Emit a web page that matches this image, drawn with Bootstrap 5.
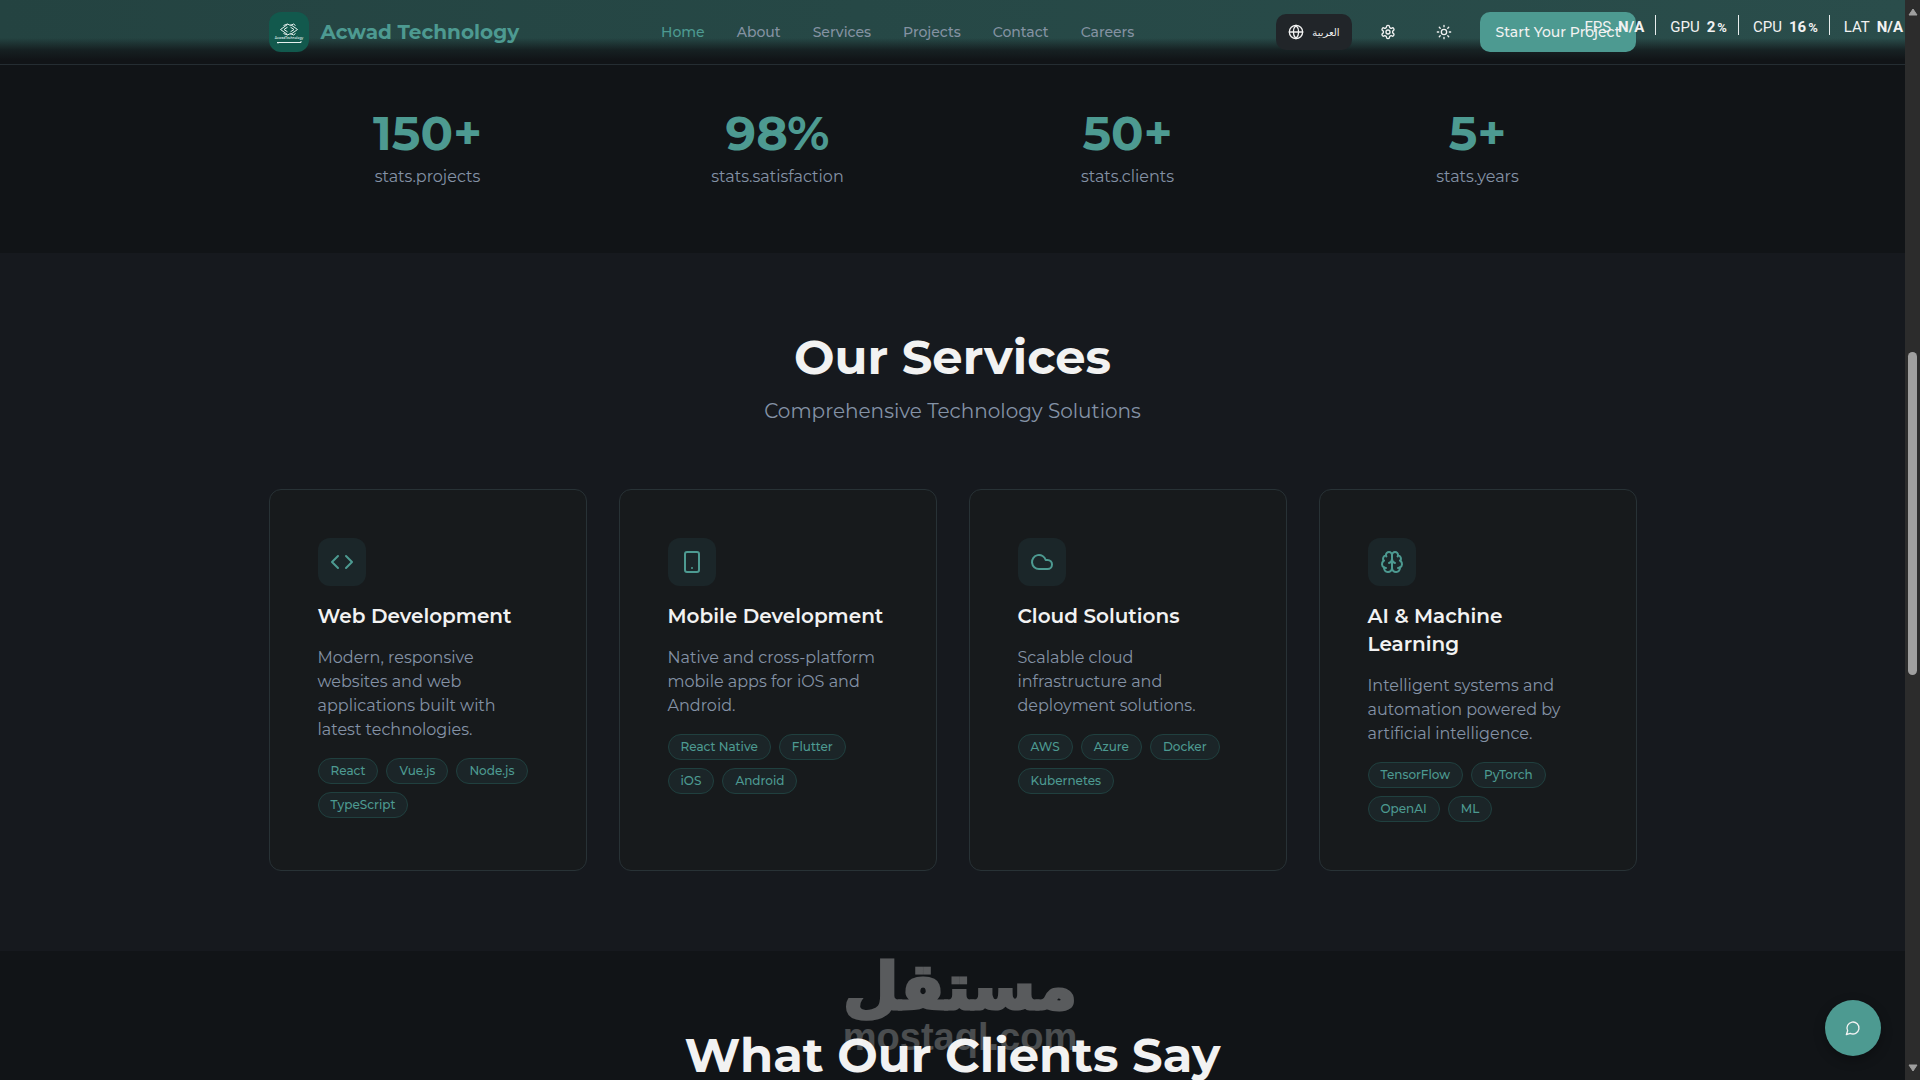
<!DOCTYPE html>
<html lang="en" data-bs-theme="dark">
<head>
<meta charset="utf-8">
<meta name="viewport" content="width=device-width, initial-scale=1">
<title>Acwad Technology</title>
<link href="https://cdn.jsdelivr.net/npm/bootstrap@5.3.0/dist/css/bootstrap.min.css" rel="stylesheet">
<style>
  :root { --teal: #4d9a91; --ink: #f2f2f2; --soft: #8492a6; --base: #111417; --raised: #16191e; }
  body { font-family: Montserrat, Inter, "Open Sans", sans-serif; font-size: 16px; line-height: 24px; background: var(--base); color: var(--ink); overflow: hidden; }
  .page-wrap { max-width: 1400px; padding: 0 16px; }
  .site-header { height: 65px; border-bottom: 1px solid #252d32; background: linear-gradient(180deg, transparent 38px, rgba(17,20,23,.75) 50px, #111417 60px), linear-gradient(90deg, #244341, #264846 45%, #2a4d4b); }
  .brand { color: var(--teal); font-size: 20px; font-weight: 700; text-decoration: none; }
  .brand-logo { width: 40px; height: 40px; border-radius: 12px; background: #12594d; }
  .site-nav { gap: 32px; font-size: 14px; font-weight: 500; }
  .site-nav a { color: #8492a2; text-decoration: none; }
  .site-nav a.active { color: var(--teal); }
  .lang-btn { height: 36px; padding: 0 12px; border: 0; border-radius: 10px; background: #212529; color: var(--ink); font: 500 10px "DejaVu Sans", sans-serif; }
  .tool-btn { width: 40px; height: 36px; border: 0; background: none; color: var(--ink); }
  .cta-btn { height: 40px; padding: 0 16px; border: 0; border-radius: 10px; background: var(--teal); color: var(--ink); font-size: 14px; font-weight: 500; }
  .stats { padding: 44px 0 64px; }
  .stat-num { font-size: 48px; line-height: 48px; font-weight: 700; color: var(--teal); margin-bottom: 8px; }
  .muted { color: var(--soft); }
  .section { padding: 80px 0; }
  .section-title { font-size: 48px; line-height: 48px; font-weight: 700; margin: 0; color: var(--ink); }
  .section-sub { font-size: 20px; line-height: 28px; margin: 16px 0 64px; }
  .cols { --bs-gutter-x: 32px; }
  .service { height: 100%; padding: 48px; border: 1px solid #283236; border-radius: 12px; background: #171a1c; }
  .service-icon { width: 48px; height: 48px; border-radius: 12px; background: #1b2629; color: var(--teal); }
  .service h3 { font-size: 20px; line-height: 28px; font-weight: 600; margin: 16px 0; color: var(--ink); }
  .service p { margin: 0 0 16px; }
  .chip { height: 26px; padding: 0 12px; line-height: 24px; font-size: 12px; font-weight: 500; border: 1px solid #20403f; border-radius: 13px; background: #1b2528; color: var(--teal); }
  .perf { top: 15px; right: 17px; font: 15px/15px Roboto, sans-serif; white-space: nowrap; }
  .perf span { padding: 5px 11px 0 14px; border-left: 1px solid #e8eded; }
  .perf span:first-child { border: 0; }
  .perf span:last-child { padding-right: 0; }
  .perf b { margin-left: 7px; }
  .perf i { font-style: normal; font-size: 13px; margin-left: 2px; }
  .chat-btn { right: 39px; bottom: 24px; width: 56px; height: 56px; border: 0; border-radius: 50%; background: var(--teal); color: var(--ink); box-shadow: 0 4px 12px rgba(0,0,0,.3); }
  .watermark { left: 0; right: 0; bottom: 23px; opacity: .3; color: #fff; pointer-events: none; }
  .wm-ar { font: 700 64px/60px "DejaVu Sans", sans-serif; -webkit-text-stroke: 3px #fff; }
  .wm-en { font: 700 38px/40px "Liberation Sans", sans-serif; opacity: .8; }
  .scroller { width: 15px; background: #2c2c2c; padding: 8px 3px; }
  .scroll-track { padding-bottom: 54px; }
  .scroll-thumb { width: 9px; height: 323px; border-radius: 5px; background: #9f9f9f; }
  .svg-line { fill: none; stroke: currentColor; stroke-width: 2; stroke-linecap: round; stroke-linejoin: round; }
</style>
<script src="https://cdn.jsdelivr.net/npm/bootstrap@5.3.0/dist/js/bootstrap.bundle.min.js"></script>
</head>
<body class="d-flex vh-100">
<div class="flex-grow-1 overflow-hidden">
  <header class="site-header">
    <div class="page-wrap mx-auto h-100 d-flex align-items-center justify-content-between">
      <a class="brand d-flex align-items-center" href="#">
        <svg class="brand-logo me-2" viewBox="0 0 40 40" aria-hidden="true">
          <g fill="none" stroke="#e6f0ee" stroke-linejoin="round">
            <path d="M18.500 12.500 11.500 17.500l7 5M21.500 12.500l7 5-7 5M18.500 15.200l-3.500 2.300 3.500 2.300M21.500 15.200l3.500 2.300-3.500 2.300M14.500 13.500l4-1.500 3 1.500 3-1.500 2 1.500M14.500 21.500l4 1.500 3-1.500 3 1.500 2-1.500"/>
            <path d="M8 30.500h24v-1.500M9 30v1.500"/>
          </g>
          <text x="20" y="27" font-size="3" font-weight="600" text-anchor="middle" fill="#d5e5e2">AcwadTechnology</text>
        </svg>
        <span class="ms-1">Acwad Technology</span>
      </a>
      <nav class="site-nav d-flex">
        <a class="active" href="#">Home</a><a href="#">About</a><a href="#">Services</a><a href="#">Projects</a><a href="#">Contact</a><a href="#">Careers</a>
      </nav>
      <div class="d-flex align-items-center gap-3">
        <button class="lang-btn d-flex align-items-center gap-2" type="button">
          <svg class="svg-line" width="16" height="16" viewBox="0 0 24 24"><circle cx="12" cy="12" r="10"/><path d="M12 2a14.500 14.500 0 0 0 0 20 14.500 14.500 0 0 0 0-20M2 12h20"/></svg>
          <span lang="ar">العربية</span>
        </button>
        <button class="tool-btn d-flex align-items-center justify-content-center" type="button" aria-label="Settings">
          <svg class="svg-line" width="16" height="16" viewBox="0 0 24 24"><path d="M12.220 2h-.44a2 2 0 0 0-2 2v.18a2 2 0 0 1-1 1.730l-.43.25a2 2 0 0 1-2 0l-.15-.08a2 2 0 0 0-2.730.73l-.22.38a2 2 0 0 0 .73 2.730l.15.1a2 2 0 0 1 1 1.720v.51a2 2 0 0 1-1 1.740l-.15.09a2 2 0 0 0-.73 2.730l.22.38a2 2 0 0 0 2.730.73l.15-.08a2 2 0 0 1 2 0l.43.25a2 2 0 0 1 1 1.730V20a2 2 0 0 0 2 2h.44a2 2 0 0 0 2-2v-.18a2 2 0 0 1 1-1.730l.43-.25a2 2 0 0 1 2 0l.15.08a2 2 0 0 0 2.730-.73l.22-.39a2 2 0 0 0-.73-2.730l-.15-.08a2 2 0 0 1-1-1.740v-.5a2 2 0 0 1 1-1.740l.15-.09a2 2 0 0 0 .73-2.730l-.22-.38a2 2 0 0 0-2.730-.73l-.15.08a2 2 0 0 1-2 0l-.43-.25a2 2 0 0 1-1-1.730V4a2 2 0 0 0-2-2z"/><circle cx="12" cy="12" r="3"/></svg>
        </button>
        <button class="tool-btn d-flex align-items-center justify-content-center" type="button" aria-label="Light theme">
          <svg class="svg-line" width="16" height="16" viewBox="0 0 24 24"><circle cx="12" cy="12" r="4"/><path d="M12 2v2M12 20v2M4.930 4.930l1.410 1.410M17.660 17.660l1.410 1.410M2 12h2M20 12h2M6.340 17.660l-1.410 1.410M19.070 4.930l-1.410 1.410"/></svg>
        </button>
        <button class="cta-btn" type="button">Start Your Project</button>
      </div>
    </div>
  </header>

  <section class="stats">
    <div class="page-wrap mx-auto">
      <div class="row cols text-center muted">
        <div class="col-3"><div class="stat-num">150+</div>stats.projects</div>
        <div class="col-3"><div class="stat-num">98%</div>stats.satisfaction</div>
        <div class="col-3"><div class="stat-num">50+</div>stats.clients</div>
        <div class="col-3"><div class="stat-num">5+</div>stats.years</div>
      </div>
    </div>
  </section>

  <section class="section" style="background: var(--raised)">
    <div class="page-wrap mx-auto">
      <h2 class="section-title text-center">Our Services</h2>
      <p class="section-sub text-center muted">Comprehensive Technology Solutions</p>
      <div class="row cols">
        <div class="col-3"><article class="service">
          <div class="service-icon d-flex align-items-center justify-content-center"><svg class="svg-line" width="24" height="24" viewBox="0 0 24 24"><path d="m16 18 6-6-6-6M8 6l-6 6 6 6"/></svg></div>
          <h3>Web Development</h3>
          <p class="muted">Modern, responsive websites and web applications built with latest technologies.</p>
          <div class="d-flex flex-wrap gap-2"><span class="chip">React</span><span class="chip">Vue.js</span><span class="chip">Node.js</span><span class="chip">TypeScript</span></div>
        </article></div>
        <div class="col-3"><article class="service">
          <div class="service-icon d-flex align-items-center justify-content-center"><svg class="svg-line" width="24" height="24" viewBox="0 0 24 24"><rect x="5" y="2" width="14" height="20" rx="2"/><path d="M12 18h.01"/></svg></div>
          <h3>Mobile Development</h3>
          <p class="muted">Native and cross-platform mobile apps for iOS and Android.</p>
          <div class="d-flex flex-wrap gap-2"><span class="chip">React Native</span><span class="chip">Flutter</span><span class="chip">iOS</span><span class="chip">Android</span></div>
        </article></div>
        <div class="col-3"><article class="service">
          <div class="service-icon d-flex align-items-center justify-content-center"><svg class="svg-line" width="24" height="24" viewBox="0 0 24 24"><path d="M17.500 19H9a7 7 0 1 1 6.710-9h1.790a4.500 4.500 0 1 1 0 9Z"/></svg></div>
          <h3>Cloud Solutions</h3>
          <p class="muted">Scalable cloud infrastructure and deployment solutions.</p>
          <div class="d-flex flex-wrap gap-2"><span class="chip">AWS</span><span class="chip">Azure</span><span class="chip">Docker</span><span class="chip">Kubernetes</span></div>
        </article></div>
        <div class="col-3"><article class="service">
          <div class="service-icon d-flex align-items-center justify-content-center"><svg class="svg-line" width="24" height="24" viewBox="0 0 24 24"><path d="M12 5a3 3 0 1 0-5.997.125 4 4 0 0 0-2.526 5.770 4 4 0 0 0 .556 6.588A4 4 0 1 0 12 18Z"/><path d="M12 5a3 3 0 1 1 5.997.125 4 4 0 0 1 2.526 5.770 4 4 0 0 1-.556 6.588A4 4 0 1 1 12 18Z"/><path d="M15 13a4.500 4.500 0 0 1-3-4 4.500 4.500 0 0 1-3 4M17.599 6.500a3 3 0 0 0 .399-1.375M6.003 5.125A3 3 0 0 0 6.401 6.500M3.477 10.896a4 4 0 0 1 .585-.396M19.938 10.500a4 4 0 0 1 .585.396M6 18a4 4 0 0 1-1.967-.516M19.967 17.484A4 4 0 0 1 18 18"/></svg></div>
          <h3>AI &amp; Machine Learning</h3>
          <p class="muted">Intelligent systems and automation powered by artificial intelligence.</p>
          <div class="d-flex flex-wrap gap-2"><span class="chip">TensorFlow</span><span class="chip">PyTorch</span><span class="chip">OpenAI</span><span class="chip">ML</span></div>
        </article></div>
      </div>
    </div>
  </section>

  <section class="section">
    <h2 class="section-title text-center">What Our Clients Say</h2>
  </section>
</div>

<div class="scroller d-flex flex-column align-items-center justify-content-between flex-shrink-0" aria-hidden="true">
  <svg width="10" height="8" viewBox="0 0 10 8"><path d="M5 1 9 7H1Z" fill="#9f9f9f" stroke="#9f9f9f" stroke-linejoin="round"/></svg>
  <div class="scroll-track"><div class="scroll-thumb"></div></div>
  <svg width="10" height="8" viewBox="0 0 10 8"><path d="M5 7 9 1H1Z" fill="#9f9f9f" stroke="#9f9f9f" stroke-linejoin="round"/></svg>
</div>

<div class="perf d-flex position-absolute"><span>FPS<b>N/A</b></span><span>GPU<b>2<i>%</i></b></span><span>CPU<b>16<i>%</i></b></span><span>LAT<b>N/A</b></span></div>

<div class="watermark position-absolute text-center"><div class="wm-ar" lang="ar">مستقل</div><div class="wm-en">mostaql.com</div></div>

<button class="chat-btn position-absolute d-flex align-items-center justify-content-center" type="button" aria-label="Open chat">
  <svg class="svg-line" width="16" height="16" viewBox="0 0 24 24"><path d="M7.900 20A9 9 0 1 0 4 16.100L2 22Z"/></svg>
</button>
</body>
</html>
